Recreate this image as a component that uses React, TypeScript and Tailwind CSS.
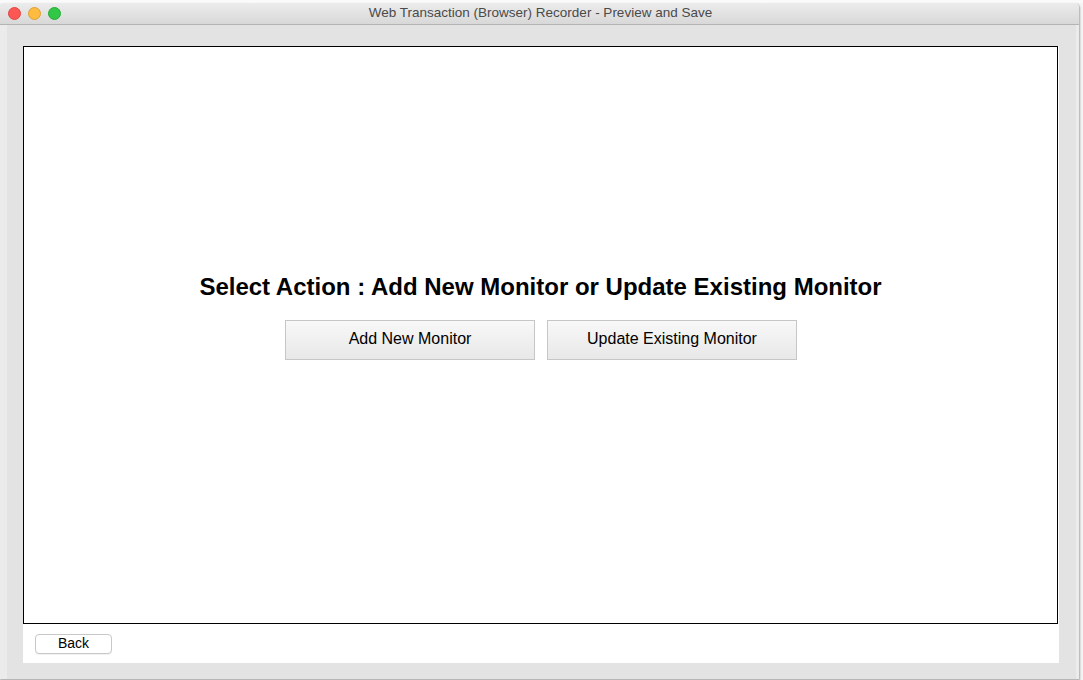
export default function App() {
  const font = { fontFamily: '"Liberation Sans", Arial, sans-serif' };

  return (
    <div className="w-[1083px] h-[680px] bg-[#f4f4f4] overflow-hidden" style={font}>
      <div className="h-[3px] bg-[#fafafa]" />
      <div className="w-[1080px] h-[676px] flex flex-col rounded-t-[5px] overflow-hidden shadow-[0_1px_2px_rgba(0,0,0,0.35)] border-r border-[#bdbdbd]">
        {/* title bar */}
        <div className="relative h-[22px] bg-gradient-to-b from-[#ececec] to-[#d8d8d8] border-b border-[#b4b4b4] flex items-center justify-center">
          <div className="absolute left-[8px] top-[4px] flex gap-[7px]">
            <span className="w-[13px] h-[13px] rounded-full bg-[#fc5753] border border-[#df4744]" />
            <span className="w-[13px] h-[13px] rounded-full bg-[#fdbc40] border border-[#de9f34]" />
            <span className="w-[13px] h-[13px] rounded-full bg-[#33c748] border border-[#27aa35]" />
          </div>
          <span className="text-[13.5px] text-[#4a4a4a] pl-[2px]">
            Web Transaction (Browser) Recorder - Preview and Save
          </span>
        </div>

        {/* body */}
        <div className="flex-1 bg-[#e3e3e3] border-l-[7px] border-l-[#ebebeb] border-r-[3px] border-r-[#ebebeb] pl-[16px] pt-[21px]">
          <div className="w-[1036px] h-[617px] bg-white flex flex-col">
            <div className="h-[578px] w-[1035px] border border-black flex flex-col items-center pt-[226px]">
              <h1 className="text-[24px] leading-[28px] font-bold text-black">
                Select Action : Add New Monitor or Update Existing Monitor
              </h1>
              <div className="flex gap-[12px] mt-[19px] pl-[1px]">
                <button className="w-[250px] h-[40px] border border-[#c6c6c6] bg-gradient-to-b from-[#f8f8f8] to-[#e8e8e8] text-[16px] leading-[20px] pb-[2px] text-black">
                  Add New Monitor
                </button>
                <button className="w-[250px] h-[40px] border border-[#c6c6c6] bg-gradient-to-b from-[#f8f8f8] to-[#e8e8e8] text-[16px] leading-[20px] pb-[2px] text-black">
                  Update Existing Monitor
                </button>
              </div>
            </div>
            <div className="pl-[12px] pt-[10px]">
              <button className="w-[77px] h-[20px] rounded-[4px] border border-[#c8c8c8] bg-white text-[14px] leading-[16px] pb-[3px] text-black flex items-center justify-center shadow-[0_1px_0_rgba(0,0,0,0.05)]">
                Back
              </button>
            </div>
          </div>
        </div>
      </div>
    </div>
  );
}
